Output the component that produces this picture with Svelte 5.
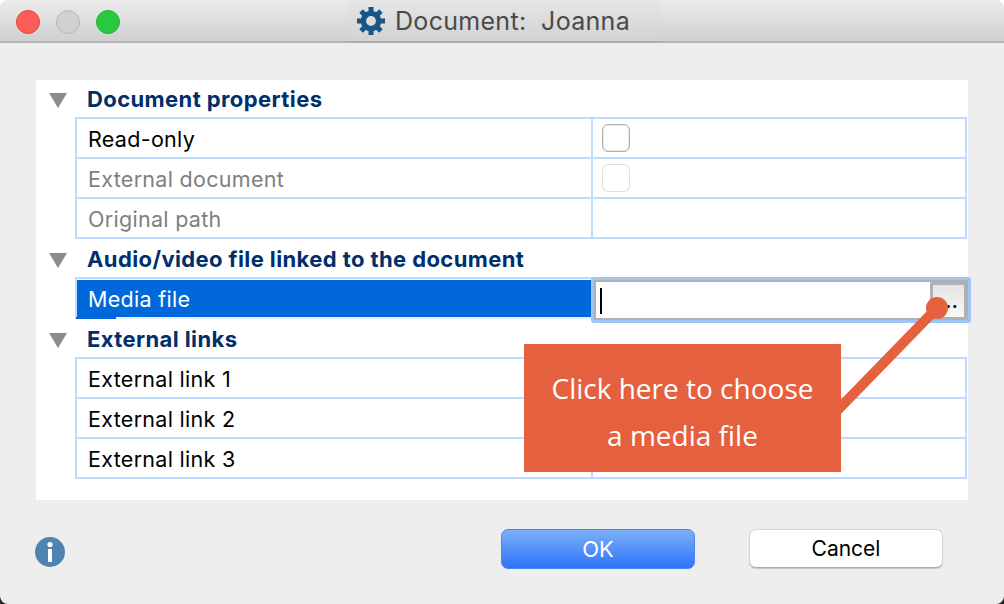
<script>
    const GROUPS = [
        {
            title: 'Document properties',
            rows: [
                { label: 'Read-only', check: 'on' },
                { label: 'External document', dim: true, check: 'off' },
                { label: 'Original path', dim: true },
            ],
        },
        {
            title: 'Audio/video file linked to the document',
            rows: [{ label: 'Media file', active: true }],
        },
        {
            title: 'External links',
            rows: [{ label: 'External link 1' }, { label: 'External link 2' }, { label: 'External link 3' }],
        },
    ];
    const TEETH = [0, 45, 90, 135, 180, 225, 270, 315];
</script>

<div class="window">
    <header class="titlebar">
        <div class="lights">
            <span class="light red"></span>
            <span class="light grey"></span>
            <span class="light green"></span>
        </div>
        <div class="title">
            <svg class="gear" width="28" height="28" viewBox="0 0 28 28">
                <circle cx="14" cy="14" r="7.6" fill="none" stroke="#175687" stroke-width="5.4" />
                {#each TEETH as a}
                    <rect x="11.5" y="0" width="5" height="5" fill="#175687" transform="rotate({a} 14 14)" />
                {/each}
            </svg>
            <span>Document:&nbsp; Joanna</span>
        </div>
    </header>

    <main class="panel">
        {#each GROUPS as g}
            <section class="group">
                <div class="group-head">
                    <span class="arrow"></span>
                    <span class="group-title">{g.title}</span>
                </div>
                {#each g.rows as r}
                    <div class="row" class:active={r.active}>
                        <div class="label" class:dim={r.dim}>{r.label}</div>
                        <div class="value">
                            {#if r.check}
                                <span class="check" class:off={r.check === 'off'}></span>
                            {/if}
                            {#if r.active}
                                <div class="editor">
                                    <span class="caret"></span>
                                    <span class="browse">...</span>
                                </div>
                            {/if}
                        </div>
                    </div>
                {/each}
            </section>
        {/each}
    </main>

    <footer class="footer">
        <svg class="info" width="30" height="30" viewBox="0 0 30 30">
            <circle cx="15" cy="15" r="15" fill="#5084b0" />
            <circle cx="15" cy="7.6" r="2.6" fill="#fff" />
            <rect x="13" y="12" width="4" height="13" fill="#fff" />
        </svg>
        <button class="btn ok">OK</button>
        <button class="btn cancel">Cancel</button>
    </footer>

    <svg class="pointer" width="1004" height="604" viewBox="0 0 1004 604">
        <line x1="937" y1="308" x2="830" y2="418" stroke="#e5603e" stroke-width="10" />
        <circle cx="937" cy="308" r="11" fill="#e5603e" />
    </svg>
    <div class="callout">Click here to choose<br />a media file</div>
</div>

<style>
    :global(body) {
        margin: 0;
        background: linear-gradient(#fff 50%, #222 50%);
    }
    .window {
        position: relative;
        width: 1004px;
        height: 604px;
        overflow: hidden;
        border-radius: 8px;
        background: #eeeeee;
        font-family: Inter, "Liberation Sans", sans-serif;
        display: flex;
        flex-direction: column;
    }
    .titlebar {
        height: 43px;
        box-sizing: border-box;
        flex: none;
        display: flex;
        align-items: stretch;
        padding-left: 16px;
        background: linear-gradient(#ebebeb, #d0d0d0);
        border-bottom: 2px solid #b4b4b4;
        margin-bottom: 1px;
    }
    .lights {
        display: flex;
        gap: 16px;
        align-items: center;
        width: 331px;
        height: 44px;
    }
    .light {
        width: 24px;
        height: 24px;
        box-sizing: border-box;
        border-radius: 50%;
        border: 1px solid;
    }
    .red { background: #fc5b57; border-color: #e5453f; }
    .grey { background: #d0d0d0; border-color: #b8b8b8; }
    .green { background: #28c840; border-color: #1eb532; }
    .title {
        width: 314px;
        box-sizing: border-box;
        display: flex;
        align-items: center;
        gap: 10px;
        padding-left: 10px;
        height: 43px;
        background: linear-gradient(#e6e6e6, #d2d2d2);
        border-bottom: 2px solid #aeaeae;
        color: #4a4a4a;
        font-size: 25px;
        letter-spacing: 0.3px;
        white-space: nowrap;
    }
    .panel {
        margin: 36px 36px 0;
        padding-bottom: 20px;
        background: #fff;
    }
    .group {
        padding-bottom: 1px;
        margin-left: 39px;
        width: 892px;
    }
    .group-head {
        height: 37px;
        position: relative;
        display: flex;
        align-items: center;
        color: #002f6c;
        font-size: 22px;
        letter-spacing: 0.4px;
        font-weight: 700;
        padding: 0 0 0 12px;
        box-sizing: border-box;
    }
    .arrow {
        position: absolute;
        left: -26px;
        top: 13px;
        width: 0;
        height: 0;
        border-left: 9px solid transparent;
        border-right: 9px solid transparent;
        border-top: 15px solid #8c8c8c;
    }
    .row {
        display: grid;
        grid-template-columns: 516px 1fr;
        height: 40px;
        box-sizing: border-box;
        border-top: 2px solid #bfdbff;
        border-left: 2px solid #bfdbff;
        border-right: 2px solid #bfdbff;
    }
    .row:last-child {
        height: 42px;
        border-bottom: 2px solid #bfdbff;
    }
    .label {
        padding: 2px 0 0 11px;
        display: flex;
        align-items: center;
        font-size: 21.5px;
        letter-spacing: 0.3px;
        color: #000;
    }
    .label.dim {
        color: #808080;
    }
    .value {
        position: relative;
        border-left: 2px solid #bfdbff;
        margin-left: -2px;
        padding-left: 9px;
        display: flex;
        align-items: center;
    }
    .check {
        width: 28px;
        height: 28px;
        box-sizing: border-box;
        background: #fff;
        border: 1px solid #adadad;
        border-radius: 6px;
        box-shadow: inset 0 0 2px #bbb;
    }
    .check.off {
        border-color: #dedede;
        box-shadow: none;
    }
    .row.active .label {
        background: #0068da;
        color: #fff;
        margin: 1px 0 0;
        padding-top: 1px;
        position: relative;
    }
    .row.active .label::after {
        content: "";
        position: absolute;
        left: -1px;
        bottom: -2px;
        width: 40px;
        height: 2px;
        background: #0068da;
    }
    .row.active {
        border-bottom-color: #e6f0ff;
    }
    .editor {
        position: absolute;
        inset: -2px -6px -6px -2px;
        box-sizing: border-box;
        background: #fff;
        border: 3px solid #9ec5f8;
        border-radius: 3px;
        box-shadow: inset 0 0 0 2px #b0b0b0;
    }
    .caret {
        position: absolute;
        left: 6px;
        top: 8px;
        width: 2px;
        height: 26px;
        background: #000;
    }
    .browse {
        position: absolute;
        right: 1px;
        top: 2px;
        width: 37px;
        height: 38px;
        box-sizing: border-box;
        border: 3px solid #b0b0b0;
        background: linear-gradient(#e4e4e4, #f8f8f8);
        color: #000;
        font-size: 18px;
        font-weight: 700;
        line-height: 34px;
        text-align: center;
        letter-spacing: 0.5px;
    }
    .footer {
        display: flex;
        align-items: center;
        padding: 29px 61px 0 35px;
    }
    .info {
        margin-top: 6px;
        margin-right: 436px;
    }
    .btn {
        width: 194px;
        height: 40px;
        box-sizing: border-box;
        padding: 0;
        font-family: inherit;
        font-size: 21px;
        border-radius: 7px;
    }
    .ok {
        margin-right: 54px;
        color: #fff;
        font-size: 22px;
        border: 1px solid #4a86ec;
        background: linear-gradient(#7cb0f8, #2f73f8);
    }
    .cancel {
        color: #000;
        background: #fff;
        border: 1px solid #d4d4d4;
        border-bottom-color: #aaa;
        box-shadow: 0 1px 1px #c4c4c4;
        height: 39px;
        margin-top: -1px;
    }
    .pointer {
        position: absolute;
        left: 0;
        top: 0;
    }
    .callout {
        position: absolute;
        left: 524px;
        top: 344px;
        width: 317px;
        height: 128px;
        box-sizing: border-box;
        padding-top: 21px;
        background: #e5603e;
        color: #fff;
        font-family: "Open Sans", sans-serif;
        font-size: 28px;
        line-height: 47px;
        text-align: center;
    }
</style>
